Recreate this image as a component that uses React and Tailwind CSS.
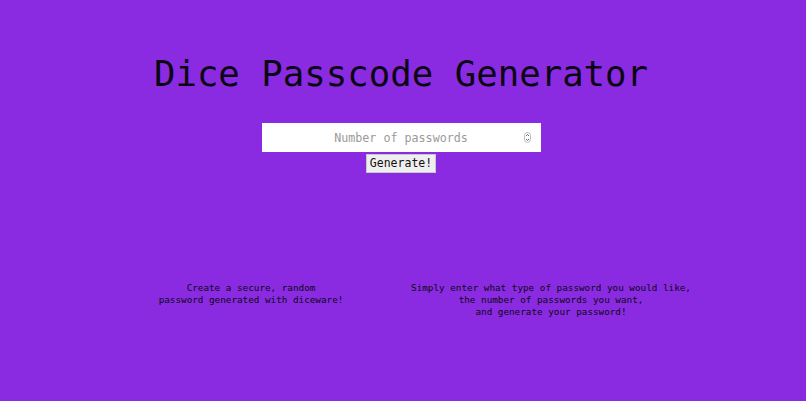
import React, { useState } from 'react';

const mono = { fontFamily: '"DejaVu Sans Mono", "Liberation Mono", monospace' };

const App = () => {
  const [count, setCount] = useState('');

  return (
    <div className="min-h-screen w-full bg-[#8a2be2] pr-[4px] text-[#0b0614]" style={mono}>
      <h1 className="pt-[51px] text-center text-[35.7px] leading-[46px] font-normal">
        Dice Passcode Generator
      </h1>

      {/* Number input + generate button */}
      <div className="mt-[26px] flex flex-col items-center">
        <div className="relative">
          <input
            type="text"
            value={count}
            onChange={(e) => setCount(e.target.value)}
            placeholder="Number of passwords"
            className="w-[279px] h-[29px] bg-white text-center text-[11.7px] outline-none placeholder:text-[#9a9a9a]"
            style={mono}
          />
          <svg
            className="absolute right-[10px] top-[9px]"
            width="7"
            height="11"
            viewBox="0 0 7 11"
          >
            <rect x="0.5" y="0.5" width="6" height="10" rx="3" fill="#fff" stroke="#bbb" />
            <path d="M2 4 L3.5 2.5 L5 4" fill="none" stroke="#444" strokeWidth="0.8" />
            <path d="M2 7 L3.5 8.5 L5 7" fill="none" stroke="#444" strokeWidth="0.8" />
          </svg>
        </div>
        <button
          className="mt-[2px] h-[19px] px-[3px] bg-[#efefef] border border-[#c8c8c8] text-[11.5px] leading-none text-[#111]"
          style={mono}
        >
          Generate!
        </button>
      </div>

      {/* Info columns */}
      <div className="mx-auto mt-[109px] grid w-[600px] grid-cols-2 text-center text-[9.3px] leading-[12px]">
        <p>
          Create a secure, random
          <br />
          password generated with diceware!
        </p>
        <p>
          Simply enter what type of password you would like,
          <br />
          the number of passwords you want,
          <br />
          and generate your password!
        </p>
      </div>
    </div>
  );
};

export default App;
